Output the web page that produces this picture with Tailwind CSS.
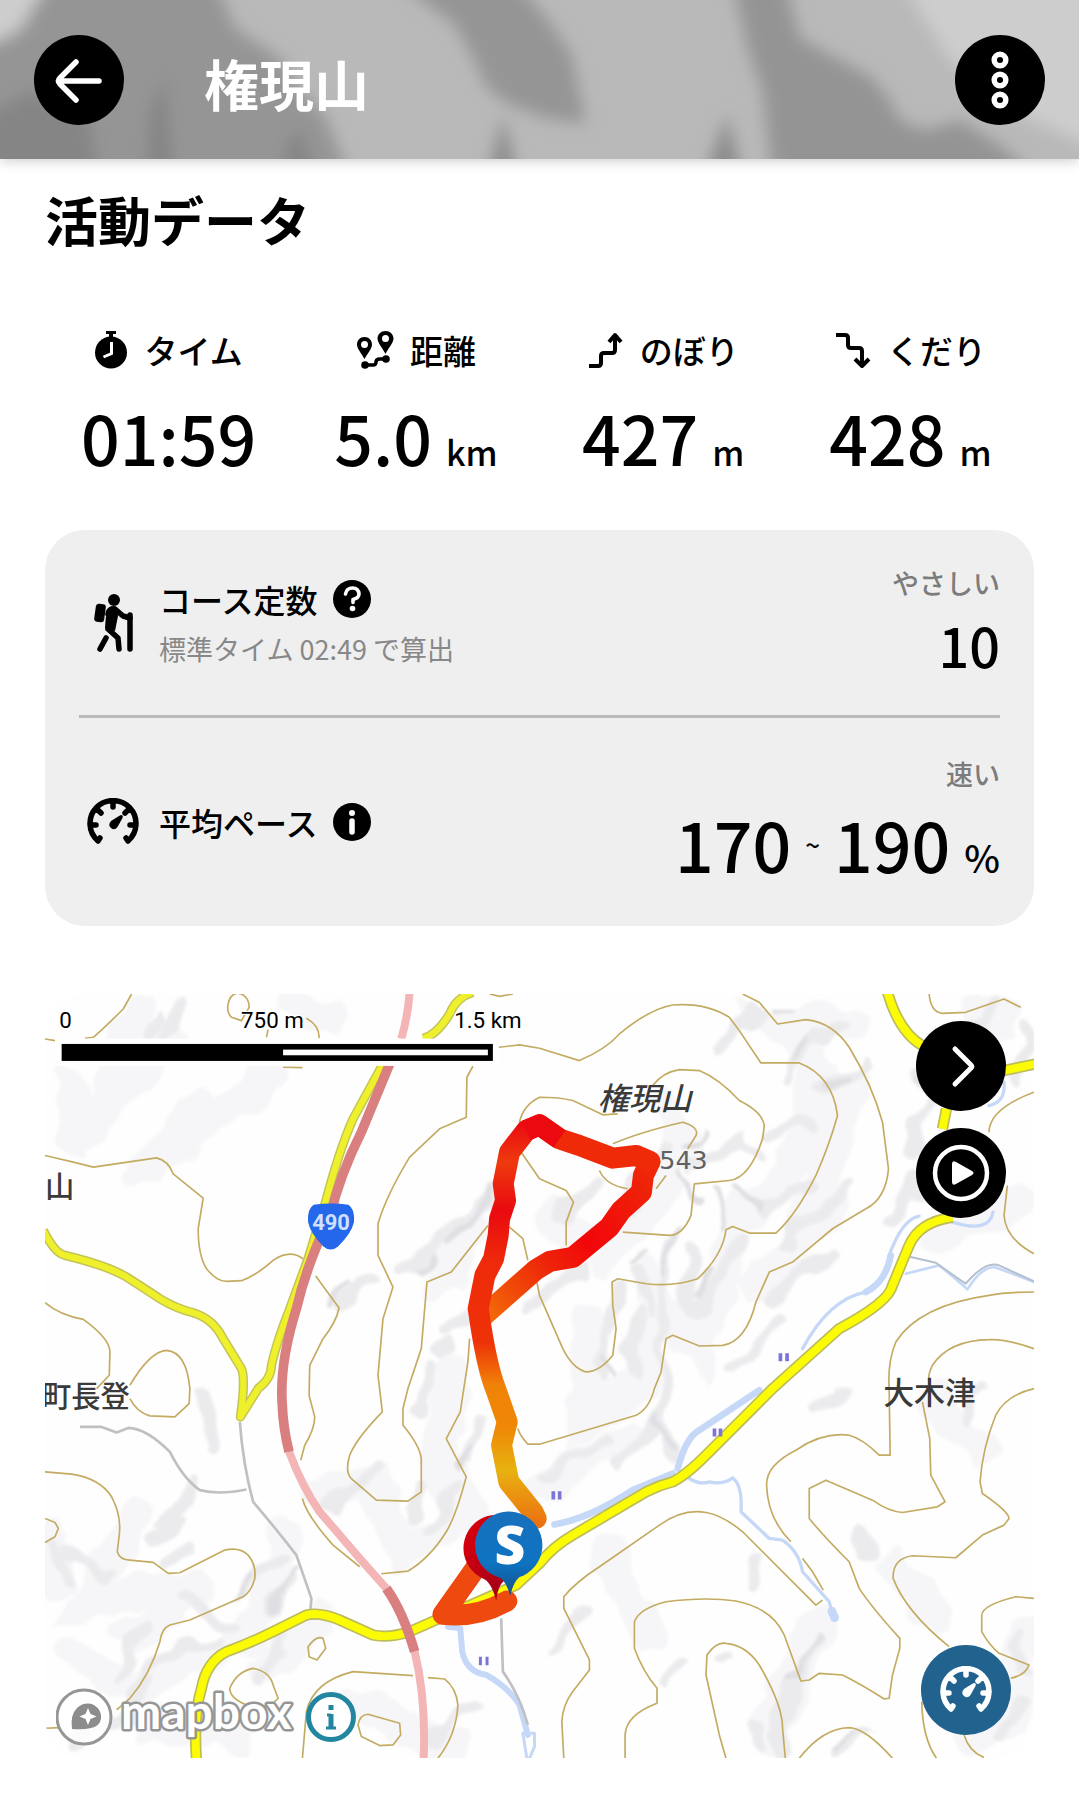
<!DOCTYPE html>
<html lang="ja">
<head>
  <meta charset="UTF-8" />
  <meta name="viewport" content="width=device-width, initial-scale=1.0"/>
  <title>権現山 | 活動データ</title>
  <script src="https://cdn.jsdelivr.net/npm/@tailwindcss/browser@4"></script>
</head>
<body class="bg-white text-black font-['Noto_Sans_CJK_JP',sans-serif] font-medium">

  <!-- Header -->
  <header class="relative h-[159px] bg-[#b9b9b9] shadow-[0_2px_12px_rgba(0,0,0,0.2)] flex items-center justify-between px-[34px]">
    <svg class="absolute inset-0 w-full h-full" viewBox="0 0 1079 159" preserveAspectRatio="none" aria-hidden="true">
      <defs><filter id="soft"><feGaussianBlur stdDeviation="8"/></filter></defs>
      <g filter="url(#soft)">
        <path fill="#cdcdcd" d="M-20-20H50L0 60H-20zM900-20H1100V150L1010 110 950 60z"/>
        <path fill="#959595" d="M50-20H215L235 28 280 58 300 90 325 115 355 190H-20V50L20 30z"/>
        <path fill="#858585" d="M-20 120L30 90 90 120 100 190H-20zM150 110L165 75 175 190H145zM285 150L300 125 320 190H285z"/>
        <path fill="#959595" d="M395-20H515L548 20 572 55 586 124 545 118 508 104 487 88 474 60 455 25z"/>
        <path fill="#8a8a8a" d="M503 115L520 190H485zM727 115L745 190H700z"/>
        <path fill="#949494" d="M732-20H785L800 38 825 52 870 76 890 100 900 120 925 130 960 120 1000 145 1050 190H774L762 90 748 50z"/>
      </g>
    </svg>
    <div class="relative flex items-center gap-20">
      <button type="button" aria-label="戻る" class="size-[90px] rounded-full bg-black text-white flex items-center justify-center">
        <svg width="90" height="90" viewBox="0 0 90 90" fill="none" stroke="currentColor" stroke-width="5.500" stroke-linecap="round" stroke-linejoin="round"><path d="M65 46H26M42 27L26 43Q23 46 26 49L42 65"/></svg>
      </button>
      <h1 class="text-white text-[55px] leading-[72px] font-bold mt-1">権現山</h1>
    </div>
    <button type="button" aria-label="メニュー" class="relative size-[90px] rounded-full bg-black text-white">
      <svg width="90" height="90" viewBox="0 0 90 90" fill="none" stroke="currentColor" stroke-width="5.500"><circle cx="45" cy="25" r="5.800"/><circle cx="45" cy="45" r="5.800"/><circle cx="45" cy="65" r="5.800"/></svg>
    </button>
  </header>

  <main class="px-[45px] pt-6">
    <h2 class="text-[53px] leading-[72px] font-bold">活動データ</h2>

    <!-- Stats -->
    <dl class="grid grid-cols-4 mt-[70px] text-center">
      <div>
        <dt class="flex items-center justify-center gap-4 text-[33px] leading-[50px]">
          <svg width="34" height="40" viewBox="0 0 34 40" aria-hidden="true"><circle cx="17" cy="22.500" r="16"/><path d="M12 1h10v3h-3v4h-4V4h-3z"/><path d="M17.500 12v11.500l-8 3.500" fill="none" stroke="#fff" stroke-width="3"/></svg>
          タイム
        </dt>
        <dd class="text-[68px] leading-[100px] mt-3">01:59</dd>
      </div>
      <div>
        <dt class="flex items-center justify-center gap-4 text-[33px] leading-[50px]">
          <svg width="38" height="40" viewBox="0 0 38 40" aria-hidden="true"><path fill-rule="evenodd" d="M8.500 7C13 7 16 10.500 16 14.500 16 19 11 24 8.500 29 6 24 1 19 1 14.500 1 10.500 4 7 8.500 7zm0 4a3.500 3.500 0 100 7 3.500 3.500 0 000-7zM29.500 1C34 1 37.500 4.500 37.500 8.500 37.500 13 32 18.500 29.500 24 27 18.500 21.500 13 21.500 8.500 21.500 4.500 25 1 29.500 1zm0 4a3.500 3.500 0 100 7 3.500 3.500 0 000-7z"/><circle cx="9" cy="35" r="3.800"/><circle cx="30" cy="29" r="3.800"/><path d="M9 35h8q3 0 3-3t4-3h6" fill="none" stroke="#000" stroke-width="3.500"/></svg>
          距離
        </dt>
        <dd class="flex items-baseline justify-center gap-[14px] text-[68px] leading-[100px] mt-3">5.0<span class="text-[34px] leading-none">km</span></dd>
      </div>
      <div>
        <dt class="flex items-center justify-center gap-4 text-[33px] leading-[50px]">
          <svg width="36" height="38" viewBox="0 0 36 38" fill="none" stroke="currentColor" stroke-width="4" stroke-linejoin="round" aria-hidden="true"><path d="M1 35h9q3 0 3-3v-7q0-3 3-3h8q3 0 3-3V4M21 11l6-7 6 7"/></svg>
          のぼり
        </dt>
        <dd class="flex items-baseline justify-center gap-[14px] text-[68px] leading-[100px] mt-3">427<span class="text-[34px] leading-none">m</span></dd>
      </div>
      <div>
        <dt class="flex items-center justify-center gap-4 text-[33px] leading-[50px]">
          <svg width="36" height="38" viewBox="0 0 36 38" fill="none" stroke="currentColor" stroke-width="4" stroke-linejoin="round" aria-hidden="true"><path d="M1 4h9q3 0 3 3v7q0 3 3 3h8q3 0 3 3v14M20 28l7 7 7-7"/></svg>
          くだり
        </dt>
        <dd class="flex items-baseline justify-center gap-[14px] text-[68px] leading-[100px] mt-3">428<span class="text-[34px] leading-none">m</span></dd>
      </div>
    </dl>

    <!-- Course constant / pace -->
    <section class="mt-[43px] rounded-[40px] bg-[#efefef] px-[34px] divide-y-[3px] divide-[#bababa]">
      <div class="flex items-center justify-between h-[188px]">
        <div class="flex items-center">
          <svg class="mx-2" width="52" height="60" viewBox="0 0 52 60" aria-hidden="true"><circle cx="27" cy="7" r="6"/><rect x="8" y="11" width="10" height="18" rx="3" transform="rotate(8 13 20)"/><path d="M21 21q1-6 7-5l8 7 7 2" fill="none" stroke="#000" stroke-width="5.500" stroke-linecap="round" stroke-linejoin="round"/><path d="M21 15h9l1 8-3 15-10-3q0-10 3-20z"/><path d="M21 36l10 9 1 11M19 45l-6 11M43 22v34" fill="none" stroke="#000" stroke-width="5.500" stroke-linecap="round" stroke-linejoin="round"/></svg>
          <div class="ml-3">
            <h3 class="flex items-center gap-4 text-[32px] leading-[52px]">コース定数
              <button type="button" aria-label="コース定数について" class="size-[38px]">
                <svg width="38" height="38" viewBox="0 0 38 38"><circle cx="19" cy="19" r="19"/><path d="M12.500 14q1-6 7-6t6.500 6q0 4-6 5.500v3" fill="none" stroke="#fff" stroke-width="3.600" stroke-linecap="round" stroke-linejoin="round"/><circle cx="19.500" cy="28.500" r="2.800" fill="#fff"/></svg>
              </button>
            </h3>
            <p class="text-[27px] leading-[48px] font-normal text-[#888888]">標準タイム 02:49 で算出</p>
          </div>
        </div>
        <div class="text-right">
          <p class="text-[27px] leading-[44px] text-[#7c7c7c]">やさしい</p>
          <p class="text-[54px] leading-[80px]">10</p>
        </div>
      </div>
      <div class="flex items-center justify-between h-[208px]">
        <div class="flex items-center">
          <svg class="mx-2" width="52" height="48" viewBox="0 0 52 48" aria-hidden="true"><g fill="none" stroke="#000" stroke-width="5.500" stroke-linecap="round"><path d="M11 43a23 23 0 1130 0M11 43l2-3M41 43l-2-3M26 5v4M12 13l2 2M40 13l-2 2M5 27h4M47 27h-4"/></g><path d="M34 17q2.500 0 1.500 3l-5 9q-3 4-6.500 1t0-7l8-5z"/></svg>
          <h3 class="ml-3 flex items-center gap-4 text-[32px] leading-[52px]">平均ペース
            <button type="button" aria-label="平均ペースについて" class="size-[38px]">
              <svg width="38" height="38" viewBox="0 0 38 38"><circle cx="19" cy="19" r="19"/><circle cx="19" cy="10" r="3" fill="#fff"/><path d="M19 18v11" stroke="#fff" stroke-width="5.500" stroke-linecap="round"/></svg>
            </button>
          </h3>
        </div>
        <div class="text-right">
          <p class="text-[27px] leading-[44px] text-[#7c7c7c]">速い</p>
          <p class="text-[68px] leading-[96px] flex items-baseline gap-[14px]"><span>170</span><span class="text-[26px] leading-none self-center">~</span><span>190</span><span class="text-[38px] leading-none">%</span></p>
        </div>
      </div>
    </section>

    <!-- Map -->
    <section aria-label="地図" class="relative mt-[68px] mb-9 rounded-[40px] overflow-hidden aspect-[990/765]">
      <svg class="w-full h-full" viewBox="15 15 2970 2295" preserveAspectRatio="xMidYMid slice">
        <defs>
          <filter id="relief" x="-5%" y="-5%" width="110%" height="110%">
            <feTurbulence type="fractalNoise" baseFrequency="0.008" numOctaves="2" seed="4" result="n"/>
            <feDisplacementMap in="SourceGraphic" in2="n" scale="110" xChannelSelector="R" yChannelSelector="G"/>
            <feGaussianBlur stdDeviation="5"/>
          </filter>
          <linearGradient id="up" gradientUnits="userSpaceOnUse" x1="0" y1="400" x2="0" y2="1600">
            <stop offset="0" stop-color="#ea0a10"/><stop offset=".1" stop-color="#ee3a0e"/><stop offset=".22" stop-color="#ea0a10"/><stop offset=".35" stop-color="#ee2a0a"/><stop offset=".55" stop-color="#ee3208"/><stop offset=".66" stop-color="#f08408"/><stop offset=".76" stop-color="#ef8606"/><stop offset=".87" stop-color="#e8b210"/><stop offset="1" stop-color="#ec7410"/>
          </linearGradient>
          <linearGradient id="back" gradientUnits="userSpaceOnUse" x1="1340" y1="970" x2="1830" y2="520">
            <stop offset="0" stop-color="#f26a08"/><stop offset=".35" stop-color="#ee2409"/><stop offset=".55" stop-color="#f2060a"/><stop offset="1" stop-color="#ee2a08"/>
          </linearGradient>
          <linearGradient id="pinRed" x1="0" y1="0" x2="1" y2="1"><stop offset="0" stop-color="#e0000c"/><stop offset="1" stop-color="#90001c"/></linearGradient>
          <linearGradient id="pinBlue" x1="0" y1="0" x2="0" y2="1"><stop offset="0" stop-color="#1870bc"/><stop offset=".6" stop-color="#0e74c2"/><stop offset="1" stop-color="#14508c"/></linearGradient>
        </defs>
        <rect x="0" y="0" width="3000" height="2400" fill="#fefefe"/>

        <!-- hill shading -->
        <g filter="url(#relief)" transform="translate(-8 -8)" fill="none" stroke-linecap="round">
          <g stroke="#f6f6f8" stroke-width="100">
            <path d="M300 60L180 380M420 140L100 460M100 300V480M700 260L330 560M900 100L760 60M480 350L350 500"/>
            <path d="M1650 1000V1300L1800 1200 1850 900 2000 1100 2100 700 2300 500 2350 250 2200 100 2450 100M1500 1500L1800 1350M1550 700L1700 800 1950 500 1900 350M2150 900L2400 650"/>
            <path d="M1200 900L1300 720M1250 1150L1200 1400 1300 1600 1100 1700 1000 1500 850 1500M300 1950L500 1800 150 1850 300 1600M60 1650L60 1800M750 1650L650 1950 300 2100 100 2000M300 2200L600 2250M950 2150L1250 2280M700 2040L850 1900"/>
            <path d="M2700 1250L2850 1400M2200 2250L2350 1900M2560 1750L2700 1900M2800 2250L2930 2200 2960 1950M2450 300L2300 750M2900 100L2800 60M2700 750L2950 650M1850 1950L1700 1700"/>
          </g>
          <g stroke="#ebebee" stroke-width="38">
            <path d="M380 90L330 150M460 40L380 160M1100 860L1280 690 1400 580M920 950L1010 870M1180 1150L1150 1260M1240 1030L1350 920M1210 1100L1250 1070"/>
            <path d="M1500 950L1640 850M1680 1190L1720 1020 1740 900M1800 860L1830 980M1900 780L1870 1060 1880 1220 1900 1400M2040 880L1990 980M1680 740L1780 640 1900 470M1580 680L1690 590M1960 560L2120 460 2160 500M2050 200L2150 60M2270 250L2420 100M2360 320L2500 230M2200 450L2330 420M2190 950L2280 870 2400 800M2620 500L2670 350 2640 260M2560 720L2650 570M2190 650L2330 600M1750 1450L1880 1300M1520 1460L1700 1380M2100 1150L2230 1000M2230 780L2450 600M1960 980L1970 800M1780 1180L1790 1000M2050 860L2120 760M2280 700L2250 800"/>
            <path d="M1170 1480L1130 1600M1260 1500L1180 1640M1310 1320L1280 1420M880 1560L1000 1460M350 1680L430 1600M380 1730L470 1680M90 1780L60 1680M240 2070L330 1930M330 2040L540 1960M700 1870L780 1790M620 1810L740 1700M100 1700L220 1760M680 2080L750 1960M120 2250L280 2210M500 1230L530 1380M1180 2250L1300 2150M330 2080L250 2200M600 1930L450 1850M450 1500L380 1620"/>
            <path d="M2330 1960L2260 2130 2220 2280M2180 2210L2170 2270M2480 2230L2430 2300M2890 2250L2960 2140M2840 1180L2800 1280M2500 1700L2470 1640M1920 2050L1900 2090M2080 2000L2060 2030M2870 60L2800 110M2970 140L2960 260M2400 1220L2350 1270M2950 1950L2980 2050M2140 1800L2180 1730M1550 1980L1630 1880"/>
          </g>
          <g stroke="#dfdfe3" stroke-width="18">
            <path d="M1240 760L1350 620M1140 850L1200 800M1700 1110L1720 1190M1880 1300L1900 1370M1790 830L1830 780M1910 760L1880 860M2010 860L1990 930M2280 230L2320 190M2640 280L2690 330M2370 320L2420 290M2090 620L2190 640M1950 490L2000 430M2050 720L2040 620M1940 590L1990 640M740 1830L790 1750M700 1870L750 1810M600 1820L650 1780M2330 1950L2270 2080M2460 2230L2430 2290M2260 60L2200 50M880 950L930 900M1250 1450L1300 1380"/>
          </g>
        </g>

        <!-- contour lines -->
        <g fill="none" stroke="#c3ab62" stroke-width="5" stroke-linejoin="round">
          <path d="M275 15L250 60Q190 120 160 145L135 148M15 150L45 155M565 45Q570 15 595 12 628 20 628 55L605 95 575 85Q560 70 565 45M680 145L685 122M800 88Q840 110 838 148M730 235L788 236M1350 15L1380 22 1420 15"/>
          <path d="M15 500L100 520 160 535 350 507Q385 515 400 555L490 628 475 720Q475 800 500 840 530 878 560 878L605 876Q650 860 700 815 750 780 790 810M828 862L898 958Q890 1000 850 1050L810 1130 808 1220 825 1285Q825 1320 795 1370L783 1415"/>
          <path d="M15 942Q60 980 130 992 210 1050 210 1090L208 1160 170 1200M270 1190Q330 1088 380 1085 440 1090 450 1200L448 1245 405 1285 330 1282Q290 1270 270 1230"/>
          <path d="M1300 232L1282 265 1280 385 1200 420 1110 505Q1040 620 1015 705L1015 800 1060 895 1030 990 1015 1160 1028 1270Q950 1350 930 1400 915 1450 935 1470L1010 1535 1105 1538 1145 1510V1410Q1140 1370 1090 1310V1260L1105 1200 1145 1080 1162 880 1235 850 1345 710M1410 715L1450 750 1465 815"/>
          <path d="M1378 175L1440 168 1500 178 1620 215Q1700 180 1740 135 1830 60 1900 48 2000 40 2070 85L2100 125 2165 222H2280Q2380 260 2395 380 2370 470 2330 560 2270 680 2210 733H2130L2080 713 2060 723Q2050 800 1975 870 1900 895 1820 885L1735 870 1718 880 1720 950 1730 1020 1720 1100Q1680 1150 1640 1150 1600 1140 1570 1080L1500 920 1492 880"/>
          <path d="M2110 15L2160 40 2215 105 2300 92Q2380 100 2430 175 2500 290 2530 400L2548 540Q2540 630 2480 660L2380 720 2260 820 2190 850 2150 940Q2120 1060 2050 1070L1980 1072 1900 1040 1880 1050 1865 1150 1845 1200Q1830 1260 1790 1280L1500 1367H1465Q1440 1340 1435 1320"/>
          <path d="M1840 290Q1870 250 1920 242L1980 245Q2040 270 2100 335 2170 370 2175 410L2170 450Q2130 570 2070 575L1965 585 1955 680Q1930 740 1890 740L1750 730M1735 375L1690 378 1600 335Q1560 325 1500 325 1450 350 1440 400M1720 465Q1800 430 1930 400 1980 415 1970 440L1945 480M1680 545Q1700 590 1765 600M1880 560L1850 600M1445 490L1500 570 1580 605 1602 640 1580 700V770"/>
          <path d="M2670 15Q2675 70 2710 73L2780 70 2895 30 2945 55M2985 310Q2850 360 2850 430M2905 590L2895 680Q2900 750 2985 795"/>
          <path d="M2985 910Q2900 910 2850 920 2640 950 2570 1060 2545 1120 2550 1200L2553 1400H2520Q2470 1350 2430 1340 2350 1330 2270 1385 2180 1430 2182 1490 2185 1590 2255 1660M2290 1710L2320 1750 2352 1805"/>
          <path d="M2985 1080Q2900 1050 2850 1053 2730 1055 2680 1130 2665 1160 2670 1180M2650 1240L2672 1350 2675 1460 2718 1540 2695 1555 2590 1572Q2550 1570 2500 1535L2360 1475 2310 1500V1590Q2350 1640 2430 1720L2460 1800Q2500 1860 2582 1950V1980L2560 2060 2550 2130 2535 2132Q2470 2090 2410 2060L2340 2055 2310 2075 2285 2078 2235 1940Q2200 1860 2090 1838 2000 1825 1880 1840 1800 1860 1785 1900V1980Q1810 2050 1853 2100V2145Q1760 2180 1757 2240V2310"/>
          <path d="M2985 1200Q2900 1220 2870 1280 2830 1380 2823 1480L2830 1515Q2910 1570 2910 1590L2895 1610 2830 1640 2750 1708 2620 1702Q2560 1710 2562 1770 2600 1870 2730 1975M2985 1830L2930 1825Q2830 1850 2828 1880V1930Q2850 1970 2880 1995L2970 2030Q2960 2060 2915 2070M2775 2240Q2790 2290 2835 2308M2648 2140Q2650 2250 2692 2310M2280 2310Q2350 2220 2430 2218 2480 2220 2560 2310"/>
          <path d="M1573 2310L1567 2200Q1570 2150 1600 2110L1650 2045V2015L1573 1860V1825Q1610 1780 1680 1735L1860 1610Q1930 1560 2000 1572 2050 1580 2110 1630L2330 1850 2350 1835M2060 2310L2040 2240 2000 2060 2003 2000Q2030 1960 2060 1965 2120 1970 2160 2030 2230 2150 2230 2220L2238 2310"/>
          <path d="M15 1450L95 1457Q180 1470 215 1525 245 1580 238 1640L232 1690Q240 1715 270 1715L340 1722 385 1755 420 1753 555 1685Q600 1675 625 1700 650 1730 645 1770 635 1810 610 1825L450 1895 390 1910Q365 1920 360 1960 330 2060 270 2130L230 2165M15 1590L45 1602 55 1620 45 1645 15 1662M15 2220L60 2218"/>
          <path d="M1290 1050L1285 1120 1262 1270 1220 1350 1280 1465Q1250 1580 1220 1630 1170 1710 1105 1748L1025 1756M960 1735L880 1670Q800 1580 788 1530M805 1975Q830 1940 850 1950L858 1980 832 2015 808 2005ZM570 2100Q590 2050 640 2040 690 2050 700 2090L715 2130 690 2155 620 2150Q570 2130 570 2100Z"/>
          <path d="M788 2310L800 2170Q820 2080 940 2050L1120 2062M1165 2068L1215 2072Q1250 2100 1255 2150 1250 2240 1195 2310M955 2210Q960 2180 985 2178L1080 2205 1083 2240 1060 2270 1020 2272 965 2245Z"/>
        </g>

        <!-- rivers -->
        <g fill="none" stroke="#c6d8f7" stroke-linecap="round" stroke-linejoin="round">
          <path stroke-width="20" d="M1545 1608Q1650 1590 1780 1505L1900 1455M1915 1440Q1940 1345 1980 1325L2160 1205M2480 910Q2540 880 2555 800"/>
          <path stroke-width="10" d="M2290 1080Q2370 930 2480 910M2550 800Q2590 690 2640 682M1950 1470Q1980 1490 2010 1480 2050 1490 2080 1468 2110 1490 2105 1570L2190 1650 2230 1655Q2280 1690 2290 1750L2370 1840 2380 1880M2740 700Q2850 735 2862 670M2895 280Q2900 340 2850 350"/>
          <path stroke-width="26" d="M2378 1868L2386 1888"/>
          <path stroke-width="8" d="M2600 855L2700 830Q2750 870 2785 902 2830 830 2870 836L2985 880"/>
          <path stroke-width="18" d="M1225 1915L1262 1920 1268 1990Q1280 2050 1340 2060 1410 2100 1440 2150L1465 2240"/>
          <path stroke-width="9" d="M1450 2235L1485 2235V2275L1470 2310M1450 2235L1462 2310"/>
          <path stroke="#b5c0cf" stroke-width="6" d="M2615 805L2690 822Q2750 865 2780 885 2840 815 2880 830L2985 878"/>
        </g>

        <!-- roads -->
        <g fill="none" stroke-linejoin="round">
          <path stroke="#c0c0c3" stroke-width="8" d="M600 1300Q610 1430 640 1540 700 1610 770 1700L815 1830 812 1865M120 1315H185L230 1332 265 1318Q320 1320 390 1390 430 1470 480 1505 540 1520 620 1503M1385 1890L1390 2050Q1440 2120 1465 2210"/>
          <path stroke="#c4c358" stroke-width="28" d="M10 725Q45 795 75 800 200 830 260 865 330 910 360 930 410 960 460 972 520 990 550 1050L605 1140Q618 1170 602 1285L655 1200Q695 1170 695 1130 710 1060 750 960L805 810 860 630Q900 480 940 390L1030 225M1150 148Q1190 140 1230 75 1250 25 1300 10"/>
          <path stroke="#eff02c" stroke-width="19" d="M10 725Q45 795 75 800 200 830 260 865 330 910 360 930 410 960 460 972 520 990 550 1050L605 1140Q618 1170 602 1285L655 1200Q695 1170 695 1130 710 1060 750 960L805 810 860 630Q900 480 940 390L1030 225M1150 148Q1190 140 1230 75 1250 25 1300 10"/>
          <path stroke="#bdbb5a" stroke-width="34" d="M470 2315Q460 2180 485 2100 500 2020 560 1990 640 1960 700 1930L800 1880Q840 1870 900 1895L1000 1940Q1050 1950 1110 1930L1200 1890 1430 1790 1500 1725Q1540 1675 1600 1640L1820 1510Q1860 1490 1900 1480 1940 1460 2000 1400L2200 1200Q2300 1110 2400 1020 2550 940 2560 890L2610 770Q2640 700 2740 685M2545 10Q2580 130 2650 170M2895 245L2990 225M2710 420L2722 360"/>
          <path stroke="#fbfb06" stroke-width="24" d="M470 2315Q460 2180 485 2100 500 2020 560 1990 640 1960 700 1930L800 1880Q840 1870 900 1895L1000 1940Q1050 1950 1110 1930L1200 1890 1430 1790 1500 1725Q1540 1675 1600 1640L1820 1510Q1860 1490 1900 1480 1940 1460 2000 1400L2200 1200Q2300 1110 2400 1020 2550 940 2560 890L2610 770Q2640 700 2740 685M2545 10Q2580 130 2650 170M2895 245L2990 225M2710 420L2722 360"/>
          <path stroke="#f3b5b5" stroke-width="24" d="M1110 10Q1105 80 1085 150M748 1390Q790 1500 840 1570L960 1710 1040 1800M1125 1990Q1160 2130 1152 2315"/>
          <path stroke="#d97f7f" stroke-width="29" d="M1050 225L965 430Q900 560 872 680 800 830 770 960 720 1120 727 1240 730 1320 748 1390M1040 1800Q1090 1870 1125 1990"/>
        </g>

        <g fill="#7c74d6">
          <path d="M2218 1094h11v24h-11zM2238 1094h11v24h-11zM2020 1320h11v24h-11zM2038 1320h11v24h-11zM1536 1508h11v25h-11zM1555 1508h11v25h-11zM1318 2005h9v26h-9zM1338 2005h9v26h-9z"/>
        </g>

        <!-- place names -->
        <g font-family="'Noto Sans CJK JP', sans-serif" font-size="88" fill="#3a3a3a">
          <text x="15" y="626">山</text>
          <text x="270" y="1254" text-anchor="end">町長登</text>
          <text x="2532" y="1246" font-size="93">大木津</text>
          <text x="1675" y="362" font-size="94" font-style="italic">権現山</text>
          <text x="1860" y="542" font-family="'DejaVu Sans', sans-serif" font-weight="400" font-size="76" fill="#606060">543</text>
        </g>
        <path fill="#2467ea" d="M822 648Q874 640 926 648 946 660 943 700 935 735 895 773 873 792 851 773 812 735 805 700 802 660 822 648z"/>
        <text x="874" y="724" text-anchor="middle" font-family="Roboto, sans-serif" font-weight="700" font-size="66" fill="#cfe0ff">490</text>

        <!-- track -->
        <g fill="none" stroke-width="63" stroke-linejoin="round" stroke-linecap="round">
          <path stroke="#ee4a10" d="M1335 1700L1290 1765 1210 1878Q1310 1890 1402 1838"/>
          <path stroke="url(#back)" stroke-linecap="butt" d="M1325 988L1490 842 1530 818 1600 806 1710 715 1745 665 1806 610 1812 560 1832 518"/>
          <path stroke="url(#up)" d="M1490 1590L1480 1570 1408 1480 1386 1370 1403 1300 1368 1200Q1340 1130 1316 960L1336 860 1362 810 1376 740 1380 690 1398 635 1391 585 1410 490 1460 425 1500 408"/>
          <path stroke="#ee2a08" d="M1500 408L1560 450 1620 470 1720 508 1790 500 1832 518"/>
          <path stroke="#ea0a10" stroke-linecap="butt" d="M1460 425L1500 408 1560 450"/>
        </g>

        <!-- pins -->
        <path fill="url(#pinRed)" d="M1370 1836Q1355 1780 1330 1770A100 100 0 111400 1775Q1378 1780 1370 1836z"/>
        <path fill="url(#pinBlue)" d="M1412 1822Q1400 1780 1382 1768A101 101 0 111440 1766Q1422 1780 1412 1822z"/>
        <text x="1411" y="1727" text-anchor="middle" font-family="'Open Sans', sans-serif" font-weight="800" font-size="160" fill="#fff">S</text>

        <!-- scale bar -->
        <rect x="50" y="149" width="1327" height="82" fill="#fff"/>
        <rect x="65" y="165" width="1295" height="51" fill="#000"/>
        <rect x="730" y="182" width="615" height="17" fill="#fff"/>
        <g font-family="Roboto, sans-serif" font-weight="400" font-size="67" fill="#000" stroke="#fff" stroke-width="8" paint-order="stroke">
          <text x="58" y="116">0</text>
          <text x="698" y="116" text-anchor="middle">750 m</text>
          <text x="1345" y="116" text-anchor="middle">1.5 km</text>
        </g>
      </svg>

      <div class="absolute top-[27px] right-7 flex flex-col gap-[17px]">
        <button type="button" aria-label="次へ" class="size-[90px] rounded-full bg-black text-white">
          <svg width="90" height="90" viewBox="0 0 90 90" fill="none" stroke="currentColor" stroke-width="5" stroke-linecap="round" stroke-linejoin="round"><path d="M39 28l16 16q1.500 1.500 0 3L39 63"/></svg>
        </button>
        <button type="button" aria-label="再生" class="size-[90px] rounded-full bg-black text-white">
          <svg width="90" height="90" viewBox="0 0 90 90" fill="currentColor"><circle cx="45" cy="45" r="26" fill="none" stroke="currentColor" stroke-width="4.500"/><path d="M36 36q0-4 4-2l16 9q3 2 0 4l-16 9q-4 2-4-2z"/></svg>
        </button>
      </div>

      <button type="button" aria-label="ペース表示" class="absolute bottom-[23px] right-[23px] size-[90px] rounded-full bg-[#22628f] text-white flex items-center justify-center">
        <svg width="52" height="48" viewBox="0 0 52 48"><g fill="none" stroke="currentColor" stroke-width="5.500" stroke-linecap="round"><path d="M11 43a23 23 0 1130 0M11 43l2-3M41 43l-2-3M26 5v4M12 13l2 2M40 13l-2 2M5 27h4M47 27h-4"/></g><path fill="currentColor" d="M34 17q2.500 0 1.500 3l-5 9q-3 4-6.500 1t0-7l8-5z"/></svg>
      </button>

      <div class="absolute bottom-2 left-[11px] flex items-center gap-2">
        <a href="#" aria-label="mapbox">
          <svg width="242" height="66" viewBox="0 -4 242 66">
            <circle cx="28" cy="29" r="27" fill="#fff" fill-opacity=".8" stroke="#969696" stroke-width="3"/>
            <path fill="#8c8c8c" d="M16 41q-2-14 5-21 8-7 17-3 8 5 7 14-2 8-10 9-8 2-19 1z"/>
            <path fill="#fff" d="M32 20l2.500 6 6 2.500-6 2.500-2.500 6-2.500-6-6-2.500 6-2.500z"/>
            <text x="65" y="41" font-family="Lato, sans-serif" font-weight="700" font-size="48" fill="#fff" stroke="#969696" stroke-width="5" stroke-linejoin="round" paint-order="stroke">mapbox</text>
          </svg>
        </a>
        <button type="button" aria-label="地図の情報" class="size-[50px]">
          <svg width="50" height="50" viewBox="0 0 50 50" fill="none" stroke="#2386a0"><circle cx="25" cy="25" r="22.500" fill="#fff" stroke-width="5"/><path stroke-width="5" d="M25 13v5M25 22v14"/><path stroke-width="3" d="M21 23h4M20 36h10"/></svg>
        </button>
      </div>
    </section>
  </main>
</body>
</html>
